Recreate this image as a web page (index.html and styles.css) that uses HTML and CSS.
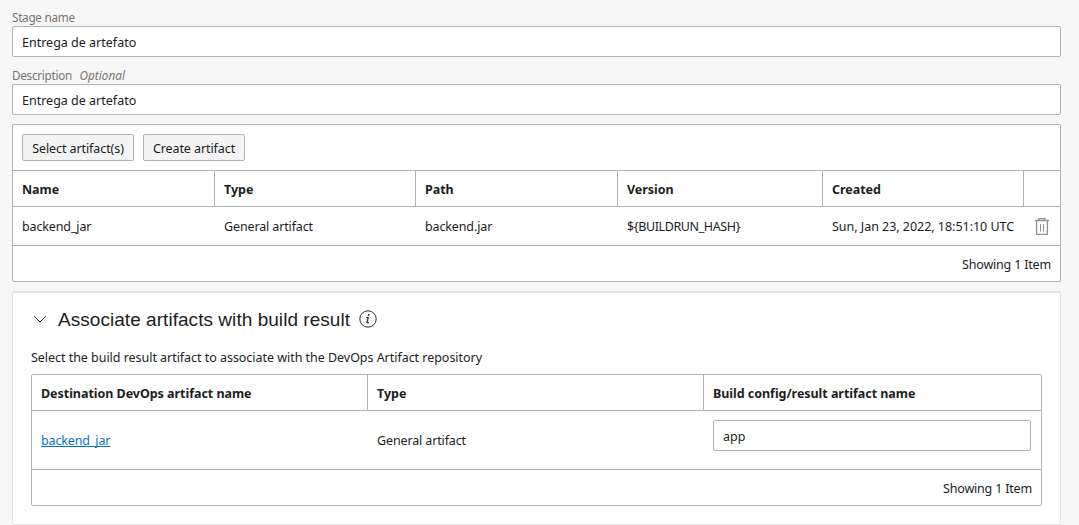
FILE: index.html
```html
<!DOCTYPE html>
<html lang="en">
<head>
<meta charset="utf-8">
<title>Build stage</title>
<link rel="stylesheet" href="styles.css">
</head>
<body>
<main class="page">
  <label class="label" for="stage">Stage name</label>
  <input class="field" id="stage" value="Entrega de artefato">
  <label class="label label-next" for="desc">Description<em class="optional">Optional</em></label>
  <input class="field" id="desc" value="Entrega de artefato">

  <section class="panel artifacts">
    <div class="toolbar">
      <button class="btn btn-select">Select artifact(s)</button>
      <button class="btn btn-create">Create artifact</button>
    </div>
    <div class="row head">
      <div class="cell">Name</div><div class="cell">Type</div><div class="cell">Path</div><div class="cell">Version</div><div class="cell">Created</div><div class="cell"></div>
    </div>
    <div class="row body">
      <div class="cell">backend_jar</div><div class="cell">General artifact</div><div class="cell">backend.jar</div><div class="cell variable">${BUILDRUN_HASH}</div><div class="cell date">Sun, Jan 23, 2022, 18:51:10 UTC</div>
      <div class="cell cell-icon">
        <svg class="trash" width="14" height="17" viewBox="0 0 14 17" fill="none" stroke="#929292"><path stroke-width="1.300" d="M0 2.500h14M4 2V.7h6V2M1.600 3v13.300h10.800V3"/><path d="M5.500 6v7.500M8.500 6v7.500"/></svg>
      </div>
    </div>
    <div class="foot">Showing 1 Item</div>
  </section>

  <section class="card">
    <header class="card-head">
      <svg class="chevron" width="12" height="7" viewBox="0 0 12 7" fill="none" stroke="#312d2a"><path d="M.3.4 6 6 11.700.4"/></svg>
      <h2 class="title">Associate artifacts with build result</h2>
      <svg class="info" width="18" height="18" viewBox="0 0 18 18" fill="none" stroke="#312d2a"><circle cx="9" cy="9" r="8.200"/><path stroke-width="1.300" d="M7.300 7.600h1.900L8 12.300q0 .9 1.900 0"/><circle cx="9.700" cy="5" r=".9" fill="#312d2a" stroke="none"/></svg>
    </header>
    <p class="hint">Select the build result artifact to associate with the DevOps Artifact repository</p>
    <div class="panel results">
      <div class="row head">
        <div class="cell">Destination DevOps artifact name</div><div class="cell">Type</div><div class="cell">Build config/result artifact name</div>
      </div>
      <div class="row body">
        <div class="cell"><a class="link" href="#">backend_jar</a></div><div class="cell">General artifact</div><div class="cell cell-field"><input class="field" value="app" aria-label="Artifact name"></div>
      </div>
      <div class="foot">Showing 1 Item</div>
    </div>
  </section>
</main>
</body>
</html>
```
FILE: styles.css
```css
* { box-sizing: border-box; }
body {
  margin: 0;
  height: 525px;
  overflow: hidden;
  background: #f7f7f7;
  color: #201e1c;
  font: 12.5px/18px "Noto Sans", sans-serif;
}
.page { display: flex; flex-direction: column; width: 1061px; padding: 9px 0 0 12px; }
.label { height: 17px; font-size: 11.7px; line-height: 17px; letter-spacing: -.26px; color: #77736f; }
.label-next { margin-top: 10px; }
.optional { margin-left: 7.500px; letter-spacing: .05px; }
.field {
  display: block;
  width: 100%;
  height: 31px;
  padding: 1px 9px 0;
  border: 1px solid #aeb3bc;
  border-radius: 2px;
  background: #fff;
  color: inherit;
  font: inherit;
}
.panel { border: 1px solid #aeb3bc; border-radius: 2px; background: #fff; }
.artifacts { margin-top: 9px; }
.toolbar { display: flex; gap: 9px; height: 45px; padding: 9px; }
.btn {
  height: 27px;
  padding: 2px 0 0;
  border: 1px solid #aeb3bc;
  border-radius: 2px;
  background: #f4f4f4;
  color: inherit;
  font: inherit;
  letter-spacing: -.08px;
  white-space: nowrap;
}
.btn-select { width: 112px; }
.btn-create { width: 102px; }
.row { display: grid; border-top: 1px solid #aeb3bc; }
.artifacts .row { grid-template-columns: 202px 201px 202px 205px 201px 36px; }
.results .row { grid-template-columns: 336px 336px 337px; }
.results .row.head { border-top: 0; }
.cell { display: flex; align-items: center; padding: 0 9px; white-space: nowrap; letter-spacing: -.13px; }
.head { font-weight: 700; }
.head .cell { height: 35px; border-right: 1px solid #aeb3bc; padding-top: 2px; letter-spacing: -.04px; }
.head .cell:last-child { border-right: 0; }
.artifacts .body .cell { height: 38px; padding-top: 2px; }
.artifacts .body .variable { letter-spacing: -.38px; }
.artifacts .body .date { letter-spacing: -.03px; }
.artifacts .body .cell-icon { padding: 1px 11px 0; }
.results .body .cell { height: 58px; padding-top: 1px; }
.results .body .cell-field { align-items: flex-start; padding: 9px 10px 0 9px; }
.foot {
  height: 36px;
  padding: 10px 9px 0;
  border-top: 1px solid #aeb3bc;
  text-align: right;
  letter-spacing: -.18px;
}
.card {
  height: 234px;
  margin-top: 9px;
  padding: 16px 18px 0;
  border: 1px solid #dfe1e5;
  border-top-width: 2px;
  border-radius: 2px;
  background: #fff;
}
.card-head { display: flex; align-items: center; height: 20px; padding-left: 3px; }
.title { margin: 0 0 0 12px; padding-top: 2px; font: 400 19px/22px "Liberation Sans", Arial, sans-serif; letter-spacing: .045px; white-space: nowrap; }
.info { margin-left: 9px; }
.hint { margin: 20px 0 0; height: 25px; line-height: 18px; letter-spacing: -.036px; }
.link { color: #0572ce; text-decoration-skip-ink: none; }
```
